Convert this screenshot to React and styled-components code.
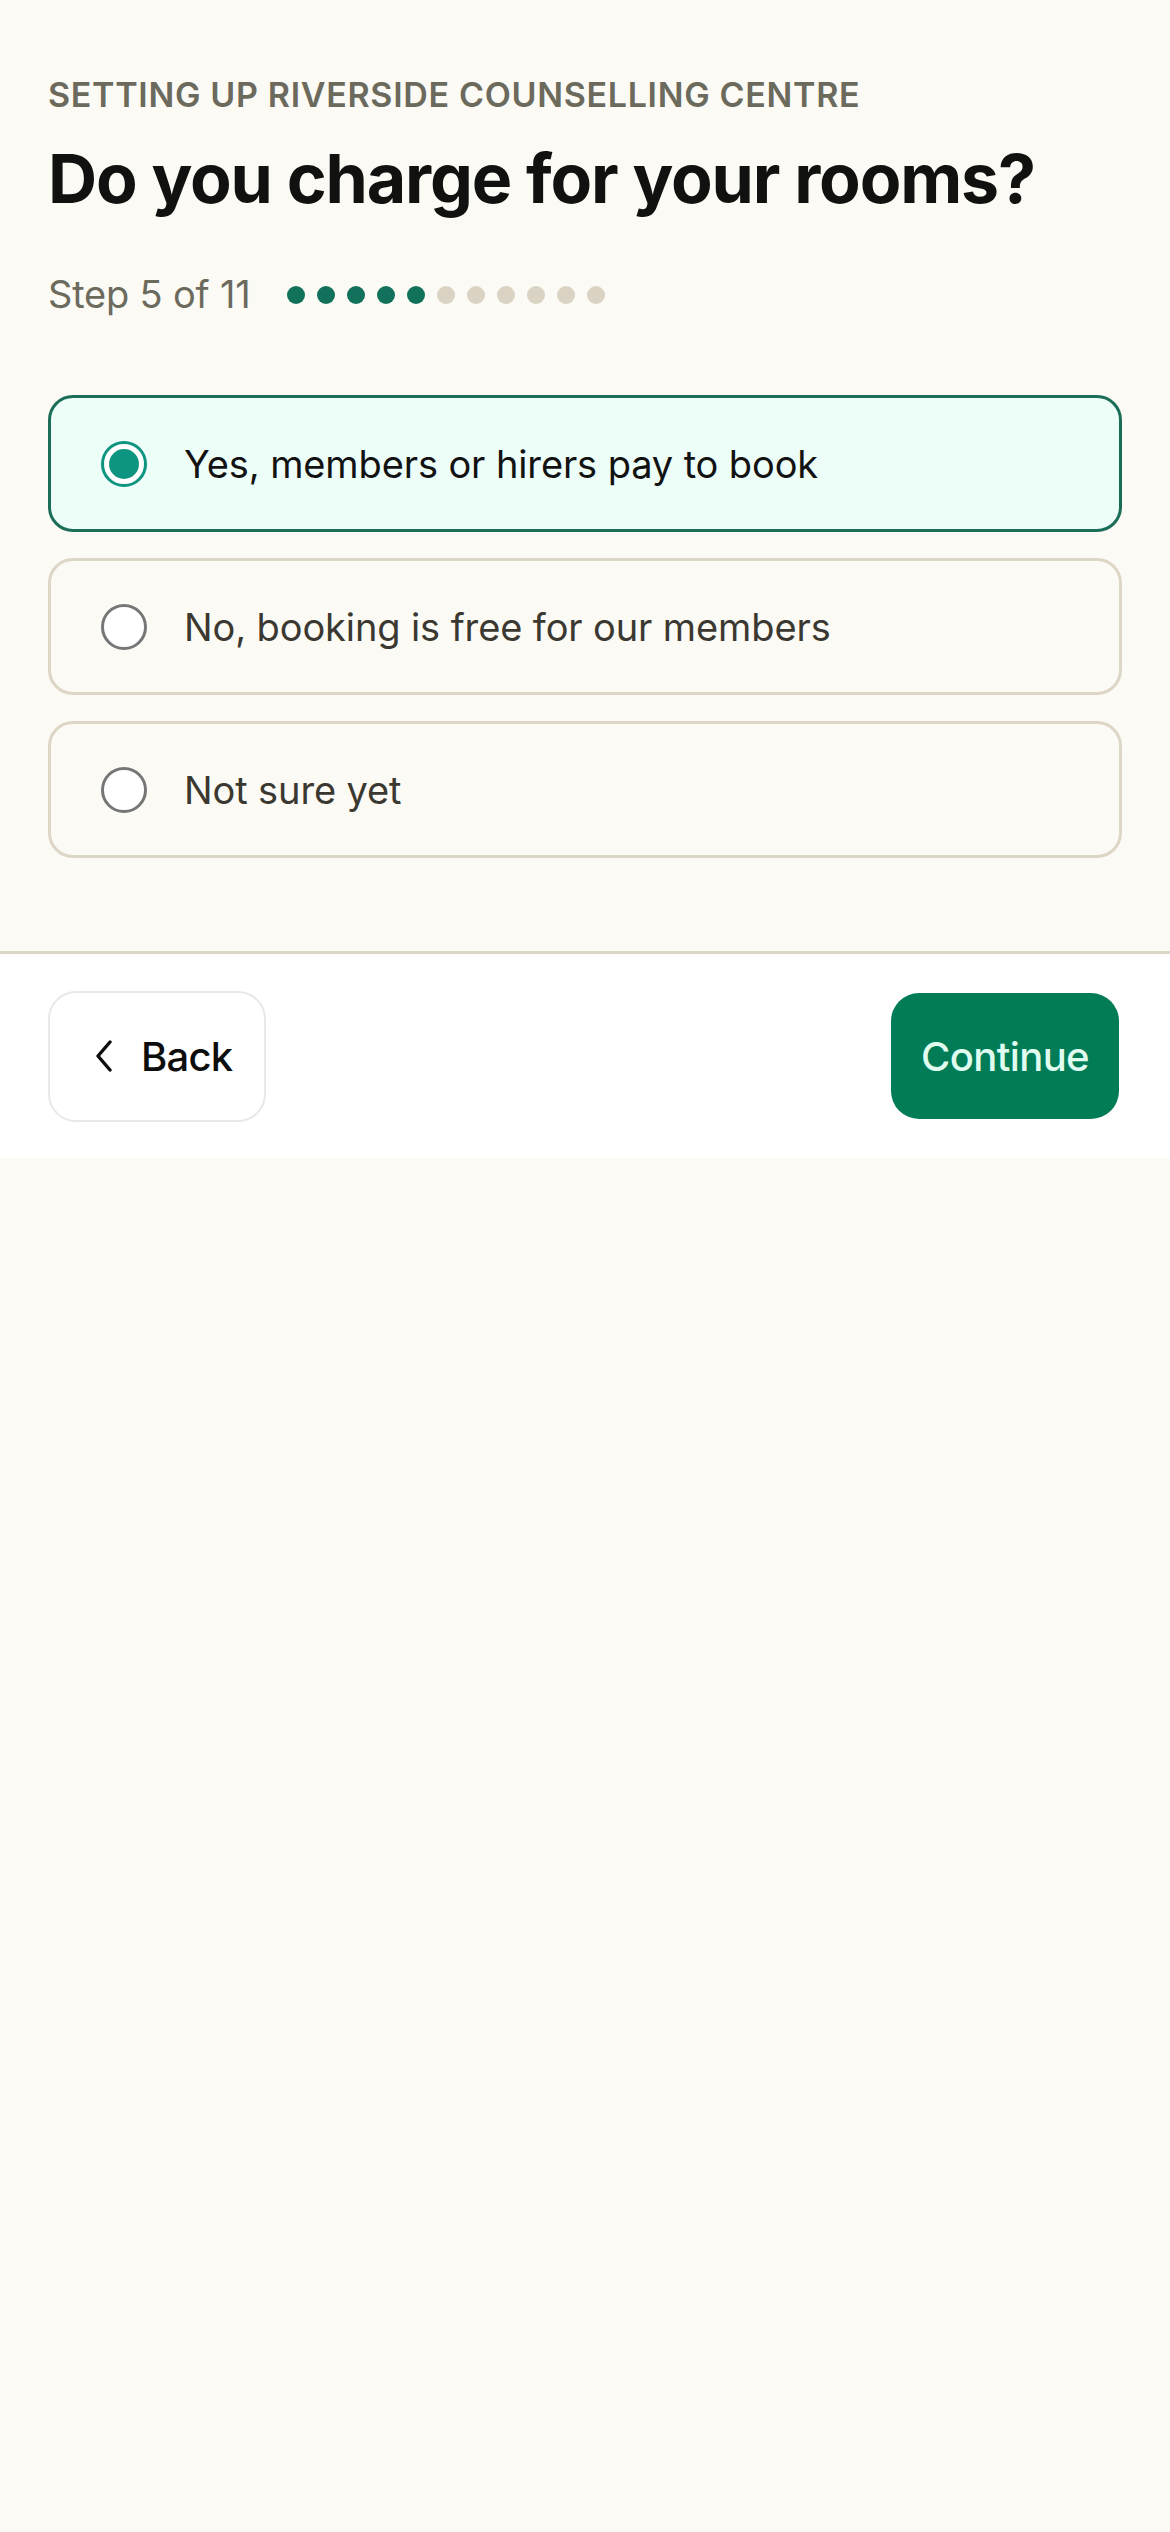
import React, { useState } from 'react'
import styled, { createGlobalStyle } from 'styled-components'

const GlobalStyle = createGlobalStyle`
  html, body {
    margin: 0;
    padding: 0;
    background: #fbfaf4;
  }
  body {
    font-family: Inter, "Noto Sans", "Liberation Sans", sans-serif;
    -webkit-font-smoothing: antialiased;
  }
  * {
    box-sizing: border-box;
  }
`;

const Page = styled.div`
  width: 1170px;
  min-height: 2532px;
  background: #fbfaf4;
`;

const Content = styled.section`
  padding: 75px 48px 93px 48px;
`;

const Eyebrow = styled.p`
  margin: 0;
  font-size: 34px;
  line-height: 1.2;
  font-weight: 600;
  letter-spacing: 0.02em;
  color: #6b6a5d;
`;

const Title = styled.h1`
  margin: 22px 0 0 0;
  font-size: 68px;
  line-height: 1.2;
  font-weight: 700;
  letter-spacing: -0.017em;
  color: #111110;
`;

const StepRow = styled.div`
  display: flex;
  align-items: center;
  gap: 36px;
  margin-top: 52px;
`;

const StepLabel = styled.span`
  font-size: 38px;
  line-height: 46px;
  letter-spacing: -0.005em;
  color: #6b6a5d;
`;

const Dots = styled.div`
  display: flex;
  gap: 12px;
  padding-top: 2px;
`;

const Dot = styled.span`
  width: 18px;
  height: 18px;
  border-radius: 50%;
  background: ${p => (p.$done ? '#11715a' : '#dad3c3')};
`;

const Options = styled.div`
  display: flex;
  flex-direction: column;
  gap: 26px;
  margin-top: 78px;
`;

const Option = styled.button`
  display: flex;
  align-items: center;
  gap: 37px;
  width: 100%;
  height: 137px;
  padding: 0 0 0 50px;
  border-radius: 25px;
  border: ${p => (p.$selected ? '3px solid #1b6d57' : '3px solid #ddd6c7')};
  background: ${p => (p.$selected ? '#edfdf8' : '#fbfaf4')};
  font: inherit;
  text-align: left;
  cursor: pointer;
`;

const Radio = styled.span`
  position: relative;
  flex: none;
  width: 46px;
  height: 46px;
  border-radius: 50%;
  border: 3px solid ${p => (p.$checked ? '#0e9582' : '#767676')};
  background: #ffffff;

  &::after {
    content: '';
    display: ${p => (p.$checked ? 'block' : 'none')};
    position: absolute;
    top: 5px;
    left: 5px;
    width: 30px;
    height: 30px;
    border-radius: 50%;
    background: #0e9582;
  }
`;

const OptionText = styled.span`
  font-size: 38px;
  letter-spacing: -0.003em;
  color: ${p => (p.$selected ? '#121212' : '#3a3830')};
`;

const Footer = styled.footer`
  display: flex;
  align-items: center;
  justify-content: space-between;
  height: 207px;
  padding: 0 51px 0 48px;
  border-top: 3px solid #dcd6c6;
  background: #ffffff;
`;

const BackButton = styled.button`
  display: flex;
  align-items: center;
  gap: 28px;
  height: 131px;
  padding: 0 32px 0 45px;
  border: 2px solid #e8e8e6;
  border-radius: 28px;
  background: #ffffff;
  color: #0d0d0d;
  font: inherit;
  font-size: 40px;
  font-weight: 500;
  letter-spacing: -0.02em;
  cursor: pointer;
`;

const ContinueButton = styled.button`
  height: 126px;
  padding: 0 30px;
  border: none;
  border-radius: 28px;
  background: #027b57;
  color: #dffcef;
  font: inherit;
  font-size: 40px;
  font-weight: 500;
  letter-spacing: -0.015em;
  cursor: pointer;
`;

const options = [
  'Yes, members or hirers pay to book',
  'No, booking is free for our members',
  'Not sure yet'
]

const TOTAL_STEPS = 11
const CURRENT_STEP = 5

const App = () => {
  const [selected, setSelected] = useState(0)

  return (
    <Page>
      <GlobalStyle />
      <Content>
        <Eyebrow>SETTING UP RIVERSIDE COUNSELLING CENTRE</Eyebrow>
        <Title>Do you charge for your rooms?</Title>
        <StepRow>
          <StepLabel>Step {CURRENT_STEP} of {TOTAL_STEPS}</StepLabel>
          <Dots>
            {Array.from({ length: TOTAL_STEPS }).map((_, i) => (
              <Dot key={i} $done={i < CURRENT_STEP} />
            ))}
          </Dots>
        </StepRow>
        <Options>
          {options.map((label, i) => (
            <Option key={label} $selected={selected === i} onClick={() => setSelected(i)}>
              <Radio $checked={selected === i} />
              <OptionText $selected={selected === i}>{label}</OptionText>
            </Option>
          ))}
        </Options>
      </Content>
      <Footer>
        <BackButton>
          <svg width="18" height="32" viewBox="0 0 18 32" fill="none">
            <polyline points="15,2 3,16 15,30" stroke="#0d0d0d" strokeWidth="3.4" strokeLinecap="round" strokeLinejoin="round" />
          </svg>
          Back
        </BackButton>
        <ContinueButton>Continue</ContinueButton>
      </Footer>
    </Page>
  )
}

export default App
